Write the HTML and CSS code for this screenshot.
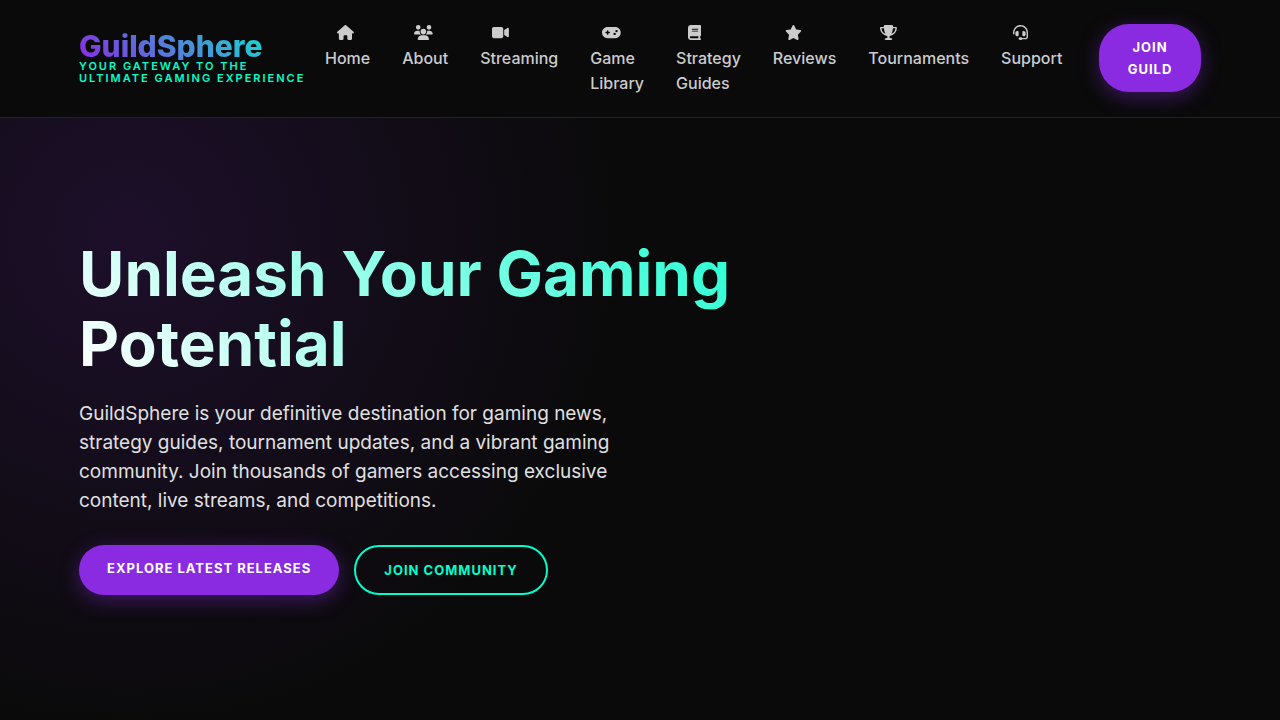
FILE: index.html
```html
<!DOCTYPE html>
<html lang="en">
<head>
    <meta charset="UTF-8">
    <meta name="viewport" content="width=device-width, initial-scale=1.0">
    <title>GuildSphere</title>
    <link rel="stylesheet" href="styles.css">
</head>
<body>
    <header class="header">
        <div class="container header-inner">
            <a href="#" class="logo">
                <span class="logo-text">GuildSphere</span>
                <span class="tagline">Your Gateway to the Ultimate Gaming Experience</span>
            </a>
            <nav class="nav">
                <ul class="nav-list">
                    <li><a href="#home">
                        <svg class="icon" viewBox="0 0 576 512" aria-hidden="true"><path d="M575.8 255.5c0 18-15 32.1-32 32.1h-32l.7 160.2c0 2.7-.2 5.4-.5 8.1V472c0 22.1-17.9 40-40 40H456c-1.1 0-2.2 0-3.3-.1c-1.4 .1-2.8 .1-4.2 .1H416 392c-22.1 0-40-17.9-40-40V448 384c0-17.7-14.3-32-32-32H256c-17.7 0-32 14.3-32 32v64 24c0 22.1-17.9 40-40 40H160 128.1c-1.5 0-3-.1-4.5-.2c-1.2 .1-2.4 .2-3.6 .2H104c-22.1 0-40-17.9-40-40V360c0-.9 0-1.9 .1-2.8V287.6H32c-18 0-32-14-32-32.1c0-9 3-17 10-24L266.4 8c7-7 15-8 22-8s15 2 21 7L564.8 231.5c8 7 12 15 11 24z"/></svg>
                        Home</a></li>
                    <li><a href="#about">
                        <svg class="icon" viewBox="0 0 640 512" aria-hidden="true"><path d="M144 0a80 80 0 1 1 0 160A80 80 0 1 1 144 0zM512 0a80 80 0 1 1 0 160A80 80 0 1 1 512 0zM0 298.7C0 239.8 47.8 192 106.7 192h42.7c15.9 0 31 3.5 44.6 9.7c-1.3 7.2-1.9 14.7-1.9 22.3c0 38.2 16.8 72.5 43.3 96c-.2 0-.4 0-.7 0H21.3C9.6 320 0 310.4 0 298.7zM405.3 320c-.2 0-.4 0-.7 0c26.6-23.5 43.3-57.8 43.3-96c0-7.6-.7-15-1.9-22.3c13.6-6.3 28.7-9.7 44.6-9.7h42.7C592.2 192 640 239.8 640 298.7c0 11.8-9.6 21.3-21.3 21.3H405.3zM224 224a96 96 0 1 1 192 0 96 96 0 1 1 -192 0zM128 485.3C128 411.7 187.7 352 261.3 352H378.7C452.3 352 512 411.7 512 485.3c0 14.7-11.9 26.7-26.7 26.7H154.7c-14.7 0-26.7-11.9-26.7-26.7z"/></svg>
                        About</a></li>
                    <li><a href="#streaming">
                        <svg class="icon" viewBox="0 0 576 512" aria-hidden="true"><path d="M0 128C0 92.7 28.7 64 64 64H320c35.3 0 64 28.7 64 64V384c0 35.3-28.7 64-64 64H64c-35.3 0-64-28.7-64-64V128zM559.1 99.8c10.4 5.6 16.9 16.4 16.9 28.2V384c0 11.8-6.5 22.6-16.9 28.2s-23 5-32.9-1.6l-96-64L416 337.1V320 192 174.9l14.2-9.5 96-64c9.8-6.5 22.4-7.2 32.9-1.6z"/></svg>
                        Streaming</a></li>
                    <li><a href="#library">
                        <svg class="icon" viewBox="0 0 640 512" aria-hidden="true"><path d="M192 64C86 64 0 150 0 256S86 448 192 448H448c106 0 192-86 192-192s-86-192-192-192H192zM496 168a40 40 0 1 1 0 80 40 40 0 1 1 0-80zM392 304a40 40 0 1 1 80 0 40 40 0 1 1 -80 0zM168 200c0-13.3 10.7-24 24-24s24 10.7 24 24v32h32c13.3 0 24 10.7 24 24s-10.7 24-24 24H216v32c0 13.3-10.7 24-24 24s-24-10.7-24-24V280H136c-13.3 0-24-10.7-24-24s10.7-24 24-24h32V200z"/></svg>
                        Game<br>Library</a></li>
                    <li><a href="#guides">
                        <svg class="icon" viewBox="0 0 448 512" aria-hidden="true"><path d="M96 0C43 0 0 43 0 96V416c0 53 43 96 96 96H384h32c17.7 0 32-14.3 32-32s-14.3-32-32-32V384c17.7 0 32-14.3 32-32V32c0-17.7-14.3-32-32-32H384 96zm0 384H352v64H96c-17.7 0-32-14.3-32-32s14.3-32 32-32zm32-240c0-8.8 7.2-16 16-16H336c8.8 0 16 7.2 16 16s-7.2 16-16 16H144c-8.8 0-16-7.2-16-16zm16 48H336c8.8 0 16 7.2 16 16s-7.2 16-16 16H144c-8.8 0-16-7.2-16-16s7.2-16 16-16z"/></svg>
                        Strategy<br>Guides</a></li>
                    <li><a href="#reviews">
                        <svg class="icon" viewBox="0 0 576 512" aria-hidden="true"><path d="M316.9 18C311.6 7 300.4 0 288.1 0s-23.4 7-28.8 18L195 150.3 51.4 171.5c-12 1.8-22 10.2-25.7 21.7s-.7 24.2 7.9 32.7L137.8 329 113.2 474.7c-2 12 3 24.2 12.9 31.3s23 8 33.8 2.3l128.3-68.5 128.3 68.5c10.8 5.7 23.9 4.9 33.8-2.3s14.9-19.3 12.9-31.3L438.5 329 542.7 225.9c8.6-8.5 11.7-21.2 7.9-32.7s-13.7-19.9-25.7-21.7L381.2 150.3 316.9 18z"/></svg>
                        Reviews</a></li>
                    <li><a href="#tournaments">
                        <svg class="icon" viewBox="0 0 576 512" aria-hidden="true"><path d="M400 0H176c-26.5 0-48.1 21.8-47.1 48.2c.2 5.3 .4 10.6 .7 15.8H24C10.7 64 0 74.7 0 88c0 92.6 33.5 157 78.5 200.7c44.3 43.1 98.3 64.8 138.1 75.8c23.4 6.5 39.4 26 39.4 45.6c0 20.9-17 37.9-37.9 37.9H192c-17.7 0-32 14.3-32 32s14.3 32 32 32H384c17.7 0 32-14.3 32-32s-14.3-32-32-32H357.9C337 448 320 431 320 410.1c0-19.6 15.9-39.2 39.4-45.6c39.9-11 93.9-32.7 138.2-75.8C542.5 245 576 180.6 576 88c0-13.3-10.7-24-24-24H446.4c.3-5.2 .5-10.4 .7-15.8C448.1 21.8 426.5 0 400 0zM48.9 112h84.4c9.1 90.1 29.2 150.3 51.9 190.6c-24.9-11-50.8-26.5-73.2-48.3c-32-31.1-58-76-63-142.3zM464.1 254.3c-22.4 21.8-48.3 37.3-73.2 48.3c22.7-40.3 42.8-100.5 51.9-190.6h84.4c-5.1 66.3-31.1 111.2-63 142.3z"/></svg>
                        Tournaments</a></li>
                    <li><a href="#support">
                        <svg class="icon" viewBox="0 0 512 512" aria-hidden="true"><path d="M256 48C141.1 48 48 141.1 48 256v40c0 13.3-10.7 24-24 24s-24-10.7-24-24V256C0 114.6 114.6 0 256 0S512 114.6 512 256V400.1c0 48.6-39.4 88-88.1 88L313.6 488c-8.3 14.3-23.8 24-41.6 24H240c-26.5 0-48-21.5-48-48s21.5-48 48-48h32c17.8 0 33.3 9.7 41.6 24l110.4 .1c22.1 0 40-17.9 40-40V256c0-114.9-93.1-208-208-208zM144 208h16c17.7 0 32 14.3 32 32V352c0 17.7-14.3 32-32 32H144c-35.3 0-64-28.7-64-64V272c0-35.3 28.7-64 64-64zm224 0c35.3 0 64 28.7 64 64v48c0 35.3-28.7 64-64 64H352c-17.7 0-32-14.3-32-32V240c0-17.7 14.3-32 32-32h16z"/></svg>
                        Support</a></li>
                </ul>
            </nav>
            <a href="#join" class="btn btn-primary btn-join">Join Guild</a>
        </div>
    </header>

    <main>
        <section class="hero" id="home">
            <div class="container">
                <div class="hero-content">
                    <h1>Unleash Your Gaming Potential</h1>
                    <p>GuildSphere is your definitive destination for gaming news, strategy guides, tournament updates, and a vibrant gaming community. Join thousands of gamers accessing exclusive content, live streams, and competitions.</p>
                    <div class="hero-buttons">
                        <a href="#releases" class="btn btn-primary">Explore Latest Releases</a>
                        <a href="#community" class="btn btn-outline">Join Community</a>
                    </div>
                </div>
            </div>
        </section>
    </main>
</body>
</html>
```
FILE: styles.css
```css
:root {
    --primary: #8a2be2;
    --accent: #00ffcc;
    --dark: #0a0a0a;
    --text: #e0e0e0;
}
* {
    margin: 0;
    padding: 0;
    box-sizing: border-box;
}
body {
    background-color: var(--dark);
    color: var(--text);
    font-family: Inter, "Open Sans", sans-serif;
}
a {
    text-decoration: none;
}
.container {
    width: 90%;
    max-width: 1400px;
    margin: 0 auto;
    padding: 0 15px;
}
.header {
    padding: 20px 0 21px;
    border-bottom: 1px solid rgba(255, 255, 255, 0.1);
}
.header-inner {
    display: flex;
    align-items: center;
    gap: 15px;
}
.logo {
    flex: 0 0 231px;
}
.logo-text {
    display: block;
    font-size: 30px;
    font-weight: 800;
    line-height: 28px;
    background: linear-gradient(45deg, var(--primary), var(--accent));
    -webkit-background-clip: text;
    background-clip: text;
    color: transparent;
}
.tagline {
    display: block;
    color: var(--accent);
    font-size: 11px;
    font-weight: 600;
    line-height: 12px;
    letter-spacing: 2px;
    text-transform: uppercase;
}
.nav-list {
    display: flex;
    gap: 32px;
    list-style: none;
}
.nav-list a {
    display: block;
    color: #cccccc;
    font-size: 16px;
    font-weight: 500;
    line-height: 25px;
}
.icon {
    display: block;
    height: 15px;
    margin: 5px 0 6px 12px;
    fill: currentColor;
}
.btn {
    padding: 12px 28px;
    border-radius: 30px;
    font-size: 13px;
    font-weight: 700;
    line-height: 22px;
    letter-spacing: 1px;
    text-align: center;
    text-transform: uppercase;
}
.btn-primary {
    background-color: var(--primary);
    color: #ffffff;
    box-shadow: 0 5px 20px rgba(138, 43, 226, 0.4);
}
.btn-outline {
    border: 2px solid var(--accent);
    color: var(--accent);
}
.btn-join {
    flex: 0 0 102px;
    margin-left: auto;
}
.hero {
    display: flex;
    align-items: center;
    min-height: 598px;
    background: radial-gradient(circle at 10% 20%, rgba(138, 43, 226, 0.15), transparent 40%);
}
.hero-content {
    max-width: 800px;
}
h1 {
    margin-bottom: 20px;
    font-size: 62px;
    font-weight: 700;
    line-height: 70px;
    background: linear-gradient(45deg, #ffffff, var(--accent));
    -webkit-background-clip: text;
    background-clip: text;
    color: transparent;
}
.hero p {
    max-width: 600px;
    margin-bottom: 30px;
    font-size: 19px;
    line-height: 29px;
}
.hero-buttons {
    display: flex;
    gap: 15px;
}
```
